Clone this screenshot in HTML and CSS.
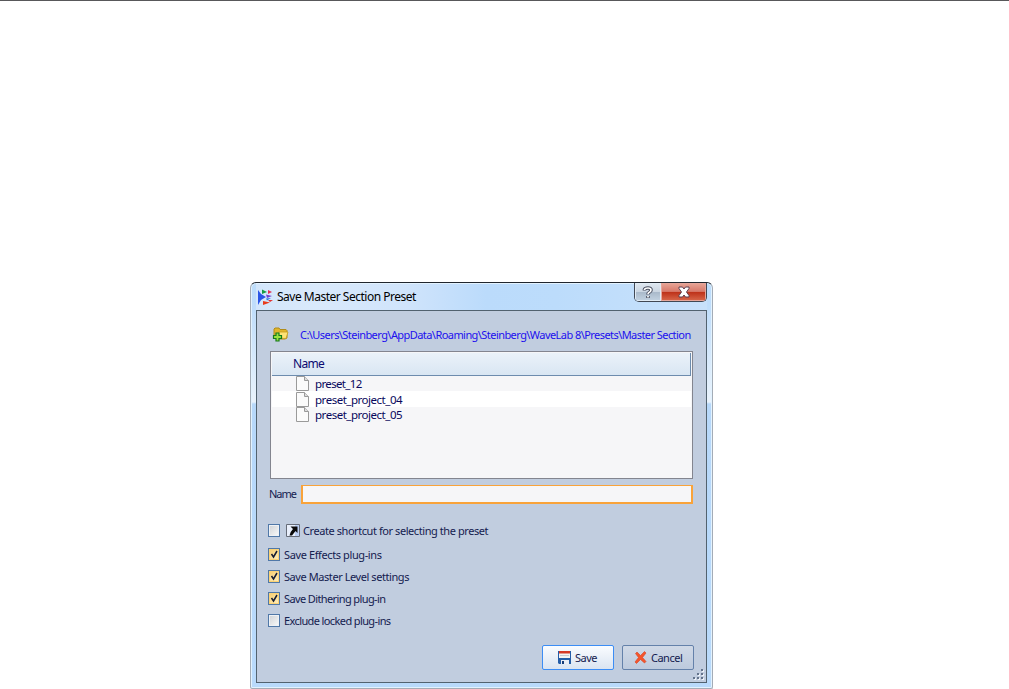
FILE: index.html
```html
<!DOCTYPE html>
<html lang="en">
<head>
    <meta charset="UTF-8">
    <title>Save Master Section Preset</title>
    <link rel="stylesheet" href="styles.css">
</head>
<body>
    <div class="window">
        <div class="titlebar">
            <svg class="logo" width="17" height="17" viewBox="0 0 17 17">
                <path d="M1 1l3 4 5 3-5 3-3 5z" fill="#2a55e6"/>
                <path d="M5 .5l5 2.500-5 2z" fill="#159c43"/>
                <path d="M11 1l4 2-4 2z" fill="#e33050"/>
                <path d="M9 5.500l6 1.500-5 2z" fill="#7440d0"/>
                <path d="M9 9.500l5-.5-4 2.500z" fill="#2878dc"/>
                <path d="M6 12l7 1.500-7 2.500z" fill="#e83b1c"/>
                <path d="M11 11h5l-3 2z" fill="#e33030"/>
            </svg>
            <span class="title">Save Master Section Preset</span>
            <div class="controls">
                <div class="help">
                    <svg width="12" height="13" viewBox="0 0 12 13" fill="none">
                        <path d="M2.500 4.500V3.500Q3 2 6 2t3 2q0 1.500-2 2.500-1 .5-1 2M6 10v2" stroke="#484d5e" stroke-width="3.600"/>
                        <path d="M2.500 4V3.500Q3 2 6 2t3 2q0 1.500-2 2.500-1 .5-1 1.700M6 10v1.500" stroke="#fff" stroke-width="1.700"/>
                    </svg>
                </div>
                <div class="close">
                    <svg width="12" height="12" viewBox="0 0 12 12">
                        <path d="M1 1h3.500L6 3l1.500-2H11v1.500L8.500 6 11 9.500V11H7.500L6 9l-1.500 2H1V9.500L3.500 6 1 2.500z" fill="#fff" stroke="#5d4050"/>
                    </svg>
                </div>
            </div>
        </div>
        <div class="panel">
            <div class="path-row">
                <svg width="17" height="16" viewBox="0 0 17 16">
                    <path d="M2 11V3l1-1h4l1 1.500h6l1 1V12l-2 1H5z" fill="#e2b52b" stroke="#b08b18"/>
                    <path d="M5 12l1.500-6h9.500l-2 6.500z" fill="#ffe276" stroke="#c69d20" stroke-width=".8"/>
                    <path d="M4 7h3v2.500h2.500v3H7V15H4v-2.500H1.500v-3H4z" fill="#9be33f" stroke="#167a1b" stroke-width="1.200"/>
                </svg>
                <span class="path">C:\Users\Steinberg\AppData\Roaming\Steinberg\WaveLab 8\Presets\Master Section</span>
            </div>
            <div class="list">
                <div class="list-head"><span>Name</span></div>
                <div class="item first">
                    <svg width="13" height="15" viewBox="0 0 13 15"><path d="M.5.5h8l4 4v10H.5z" fill="#fbfbfb" stroke="#9a9a9a"/><path d="M8.500.5v4h4" fill="#ddd" stroke="#9a9a9a"/></svg>
                    <span>preset_12</span>
                </div>
                <div class="item white">
                    <svg width="13" height="15" viewBox="0 0 13 15"><path d="M.5.5h8l4 4v10H.5z" fill="#fbfbfb" stroke="#9a9a9a"/><path d="M8.500.5v4h4" fill="#ddd" stroke="#9a9a9a"/></svg>
                    <span>preset_project_04</span>
                </div>
                <div class="item">
                    <svg width="13" height="15" viewBox="0 0 13 15"><path d="M.5.5h8l4 4v10H.5z" fill="#fbfbfb" stroke="#9a9a9a"/><path d="M8.500.5v4h4" fill="#ddd" stroke="#9a9a9a"/></svg>
                    <span>preset_project_05</span>
                </div>
            </div>
            <div class="name-row">
                <label class="name-label">Name</label>
                <div class="name-input"></div>
            </div>
            <div class="checks">
                <div class="check shortcut">
                    <div class="box"></div>
                    <svg width="14" height="13" viewBox="0 0 14 13">
                        <path d="M.5.5h13v12H.5z" fill="#e9effb" stroke="#666c78"/>
                        <path d="M9 1h4v11H9z" fill="#bdd0f5"/>
                        <path d="M4.500 2.500h7v6.500L9.500 7 6 11.500H3.500Q4 8 7 5z" fill="#0a0a0a"/>
                    </svg>
                    <span>Create shortcut for selecting the preset</span>
                </div>
                <div class="check">
                    <div class="box on"><svg width="10" height="11" viewBox="0 0 10 11"><path d="M2.500 5l2 3L8 2" fill="none" stroke="#151c33" stroke-width="1.500"/></svg></div>
                    <span class="effects">Save Effects plug-ins</span>
                </div>
                <div class="check">
                    <div class="box on"><svg width="10" height="11" viewBox="0 0 10 11"><path d="M2.500 5l2 3L8 2" fill="none" stroke="#151c33" stroke-width="1.500"/></svg></div>
                    <span class="level">Save Master Level settings</span>
                </div>
                <div class="check">
                    <div class="box on"><svg width="10" height="11" viewBox="0 0 10 11"><path d="M2.500 5l2 3L8 2" fill="none" stroke="#151c33" stroke-width="1.500"/></svg></div>
                    <span class="dither">Save Dithering plug-in</span>
                </div>
                <div class="check">
                    <div class="box"></div>
                    <span class="locked">Exclude locked plug-ins</span>
                </div>
            </div>
            <div class="buttons">
                <div class="btn save">
                    <svg width="13" height="13" viewBox="0 0 13 13">
                        <path d="M0 0h13v13H1l-1-1z" fill="#245da8"/>
                        <path d="M1 0h11v7H1z" fill="#f4f4f4"/>
                        <path d="M1 0h11v2.500H1z" fill="#d63a27"/>
                        <path d="M2 4.500h9" stroke="#c8ccd4"/>
                        <path d="M3 9h8v4H3z" fill="#e8edf5"/>
                        <path d="M4 10h2v3H4z" fill="#163c78"/>
                    </svg>
                    <span>Save</span>
                </div>
                <div class="btn cancel">
                    <svg width="13" height="13" viewBox="0 0 13 13">
                        <path d="M1.500 2.500L3 1l3.500 3.500L10.500.5 12 2 8.500 6.500l3.500 4-1.500 1.500-4-3.500L2.500 12.500 1 11l3.500-4.500z" fill="#f4552d" stroke="#d8411f" stroke-width=".6"/>
                    </svg>
                    <span>Cancel</span>
                </div>
            </div>
            <svg class="grip" width="11" height="11" viewBox="0 0 11 11">
                <path d="M8 0h2v2H8zM4 4h2v2H4zM8 4h2v2H8zM0 8h2v2H0zM4 8h2v2H4zM8 8h2v2H8z" fill="#64748c"/>
                <path d="M10 1h1v2H9V2h1zM6 5h1v2H5V6h1zM10 5h1v2H9V6h1zM2 9h1v2H1v-1h1zM6 9h1v2H5v-1h1zM10 9h1v2H9v-1h1z" fill="#eef3fa"/>
            </svg>
        </div>
    </div>
</body>
</html>
```
FILE: styles.css
```css
*{
    margin: 0;
    padding: 0;
    box-sizing: border-box;
}
body{
    height: 689px;
    overflow: hidden;
    background: #fff;
    border-top: 1px solid #58585a;
    font-family: "Noto Sans", sans-serif;
    font-size: 11px;
    color: #14204f;
}
svg{
    display: block;
    flex: none;
}
span, label{
    white-space: nowrap;
}
.window{
    width: 463px;
    height: 407px;
    margin: 281px 0 0 250px;
    padding: 0 5px;
    border: 1px solid #a4acb6;
    border-top-color: #20262e;
    border-radius: 6px 6px 2px 2px;
    background: linear-gradient(#bcdcfb 0, #c1defb 28px, #eaf3fc 119px, #b7d8fa 121px, #b9dafb 100%);
    box-shadow: inset 0 0 0 1px #e2f2fe;
}
.titlebar{
    display: flex;
    height: 27px;
    margin-top: 1px;
    margin-bottom: -1px;
    background: linear-gradient(90deg, #d3e6fb 0, #d9e9fb 60px, #d0e4fb 150px, #bbdbfb 230px, #bcdcfb 300px, #c8e1fb 100%);
}
.logo{
    margin: 5px 0 0 1px;
}
.title{
    margin-left: 3px;
    font-size: 12px;
    line-height: 25px;
    letter-spacing: -0.5px;
    color: #000;
}
.controls{
    display: flex;
    width: 73px;
    height: 19px;
    margin-left: auto;
    margin-top: -1px;
    border: 1px solid #414854;
    border-top: 0;
    border-radius: 0 0 5px 5px;
    overflow: hidden;
}
.help, .close{
    display: flex;
    align-items: center;
    justify-content: center;
}
.help{
    width: 26px;
    background: linear-gradient(#e0e8f0 0, #cbd6e2 48%, #a9b9ca 50%, #c3d3e2 100%);
    box-shadow: inset 0 0 0 1px #e1ebf4;
}
.close{
    flex: 1;
    background: linear-gradient(#e8a698 0, #d7796a 47%, #bd3018 50%, #d8694c 100%);
    box-shadow: inset 0 0 0 1px #e6a69a;
}
.panel{
    position: relative;
    width: 451px;
    height: 373px;
    border: 1px solid #52626f;
    background: #c1cddf;
}
.path-row{
    display: flex;
    align-items: center;
    height: 40px;
    padding: 6px 0 0 15px;
}
.path{
    margin-left: 11px;
    letter-spacing: -0.56px;
    color: #1c10ee;
}
.list{
    width: 423px;
    height: 128px;
    margin-left: 13px;
    padding: 1px;
    border: 1px solid #83858f;
    background: #f6f6f8;
}
.list-head{
    height: 23px;
    padding-left: 21px;
    border-right: 1px solid #6d8cae;
    border-bottom: 1px solid #6d8cae;
    background: linear-gradient(#ebf2f9, #d9e6f3);
    font-size: 12px;
    line-height: 22px;
    letter-spacing: -0.7px;
    color: #0a0a70;
}
.item{
    display: flex;
    align-items: center;
    height: 15px;
    padding-left: 24px;
    line-height: 15px;
    font-size: 11.500px;
    letter-spacing: -0.48px;
    color: #08085c;
}
.item span{
    margin-left: 6px;
}
.first{
    letter-spacing: -0.65px;
}
.white{
    height: 16px;
    background: #fff;
}
.name-row{
    display: flex;
    align-items: center;
    height: 19px;
    margin: 6px 0 0 12px;
}
.name-label{
    width: 32px;
    padding-bottom: 2px;
    letter-spacing: -1px;
}
.name-input{
    width: 392px;
    height: 19px;
    border: 2px solid #f9a33a;
    border-top-width: 1px;
    background: #f6f6f8;
}
.checks{
    padding: 15px 0 0 11px;
    letter-spacing: -0.43px;
}
.check{
    display: flex;
    align-items: center;
    height: 22px;
}
.shortcut{
    margin-bottom: 2px;
}
.effects{
    letter-spacing: -0.39px;
}
.dither, .locked{
    letter-spacing: -0.61px;
}
.box{
    width: 12px;
    height: 13px;
    margin-right: 4px;
    border: 1px solid #5078a8;
    background: linear-gradient(135deg, #cfd2d6, #fafafa);
    box-shadow: inset 0 0 0 1px #eef1f5;
}
.on{
    background: linear-gradient(135deg, #f8cc6b, #fff0c2);
    box-shadow: inset 0 0 0 1px #fbd276;
}
.shortcut .box{
    margin-right: 6px;
}
.shortcut span{
    margin-left: 3px;
}
.buttons{
    display: flex;
    gap: 8px;
    margin: 14px 0 0 285px;
}
.btn{
    display: flex;
    align-items: center;
    width: 72px;
    height: 25px;
    padding-left: 11px;
    border: 1px solid #6481aa;
    border-radius: 2px;
    background: linear-gradient(#d0d9e7, #bdcadd);
    letter-spacing: -0.5px;
}
.btn span{
    margin-left: 4px;
}
.save{
    padding-left: 15px;
    border-color: #3c8df5;
    background: linear-gradient(#fafcff, #dae4f1);
}
.grip{
    position: absolute;
    right: 2px;
    bottom: 2px;
}
```
